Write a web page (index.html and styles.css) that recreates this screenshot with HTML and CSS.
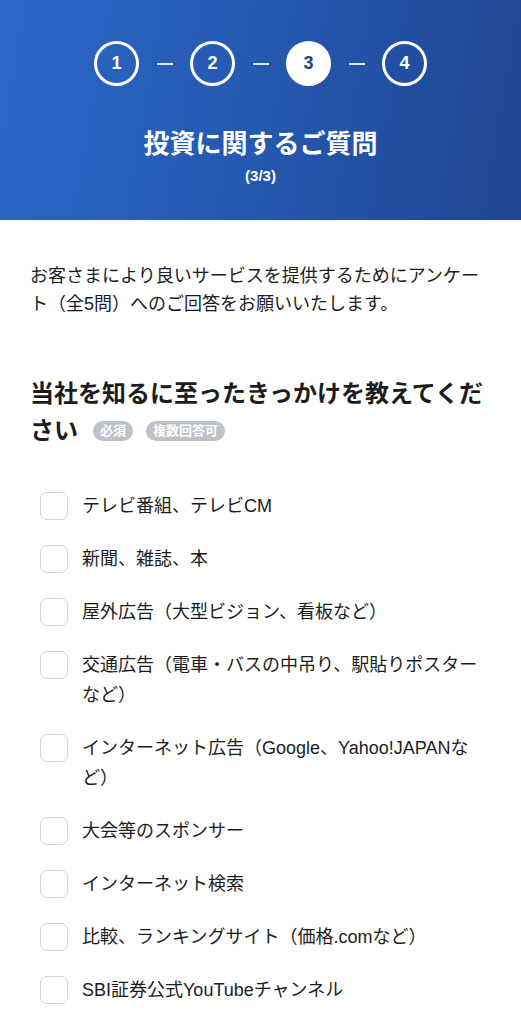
FILE: index.html
```html
<!DOCTYPE html>
<html lang="ja">
<head>
<meta charset="utf-8">
<title>投資に関するご質問</title>
<link rel="stylesheet" href="styles.css">
</head>
<body>
<header class="hero">
  <ol class="steps">
    <li class="step">1</li>
    <li class="dash"></li>
    <li class="step">2</li>
    <li class="dash"></li>
    <li class="step active">3</li>
    <li class="dash"></li>
    <li class="step">4</li>
  </ol>
  <h1 class="title">投資に関するご質問</h1>
  <p class="sub">(3/3)</p>
</header>
<main class="content">
  <p class="intro">お客さまにより良いサービスを提供するためにアンケート（全5問）へのご回答をお願いいたします。</p>
  <h2 class="question">当社を知るに至ったきっかけを教えてください<span class="tags"><span class="tag">必須</span><span class="tag">複数回答可</span></span></h2>
  <ul class="options">
    <li class="option"><span class="box"></span><span class="label">テレビ番組、テレビCM</span></li>
    <li class="option"><span class="box"></span><span class="label">新聞、雑誌、本</span></li>
    <li class="option"><span class="box"></span><span class="label">屋外広告（大型ビジョン、看板など）</span></li>
    <li class="option"><span class="box"></span><span class="label">交通広告（電車・バスの中吊り、駅貼りポスターなど）</span></li>
    <li class="option"><span class="box"></span><span class="label">インターネット広告（Google、Yahoo!JAPANなど）</span></li>
    <li class="option"><span class="box"></span><span class="label">大会等のスポンサー</span></li>
    <li class="option"><span class="box"></span><span class="label">インターネット検索</span></li>
    <li class="option"><span class="box"></span><span class="label">比較、ランキングサイト（価格.comなど）</span></li>
    <li class="option"><span class="box"></span><span class="label">SBI証券公式YouTubeチャンネル</span></li>
  </ul>
</main>
</body>
</html>
```
FILE: styles.css
```css
* { box-sizing: border-box; }
html, body { margin: 0; padding: 0; }
body {
  font-family: "Liberation Sans", "Noto Sans CJK JP", sans-serif;
  color: #1c1c1c;
  background: #fff;
  width: 521px;
}
.hero {
  background: linear-gradient(100deg, #2b68c7 0%, #2558b0 50%, #1e4590 100%);
  color: #fff;
  padding: 41px 0 34px;
  text-align: center;
}
.steps {
  list-style: none;
  margin: 0;
  padding: 0;
  display: flex;
  justify-content: center;
  align-items: center;
}
.step {
  width: 45px;
  height: 45px;
  border: 3px solid #fff;
  border-radius: 50%;
  display: flex;
  align-items: center;
  justify-content: center;
  font-size: 18px;
  font-weight: bold;
  color: #fff;
}
.step.active {
  background: #fff;
  color: #1e3f80;
}
.dash {
  width: 16px;
  height: 2px;
  background: rgba(255,255,255,0.85);
  margin: 0 17.5px;
}
.title {
  margin: 40px 0 0;
  font-size: 26px;
  line-height: 36px;
  font-weight: bold;
}
.sub {
  margin: 4px 0 0;
  font-size: 15px;
  line-height: 20px;
  font-weight: bold;
}
.content {
  padding: 42px 30px 40px;
}
.intro {
  margin: 0;
  font-size: 18px;
  line-height: 28px;
}
.question {
  margin: 57px 0 0;
  font-size: 24px;
  line-height: 37px;
  font-weight: bold;
}
.tags {
  display: inline-flex;
  gap: 13px;
  margin-left: 15px;
  vertical-align: 4px;
}
.tag {
  display: inline-flex;
  align-items: center;
  height: 20px;
  background: #bcc2ca;
  color: #fff;
  font-size: 13px;
  line-height: 1;
  font-weight: bold;
  padding: 0 7px;
  border-radius: 10px;
}
.options {
  list-style: none;
  margin: 42px 0 0;
  padding: 0 0 0 10px;
  display: flex;
  flex-direction: column;
  gap: 23px;
}
.option {
  display: flex;
  align-items: flex-start;
  gap: 14px;
}
.box {
  flex: none;
  width: 28px;
  height: 28px;
  margin-top: 1px;
  border: 1.5px solid #d3d3d3;
  border-radius: 7px;
  background: #fff;
}
.label {
  font-size: 18px;
  line-height: 30px;
}
```
